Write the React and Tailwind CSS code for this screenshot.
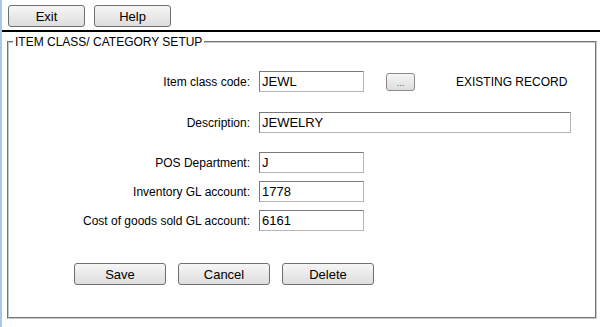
const btn =
  "h-[22px] rounded-[3px] border border-[#707070] bg-gradient-to-b from-[#f6f6f6] to-[#dddddd] text-[13px] text-black leading-none";

const Field = ({ label, value, width = "w-[105px]" }) => (
  <div className="flex items-center">
    <div className="w-[250px] pr-[9px] text-right text-[12px]">{label}</div>
    <div
      className={`${width} h-[21px] border border-t-[#7a7a7a] border-l-[#7a7a7a] border-r-[#b5b5b5] border-b-[#b5b5b5] px-[2px] text-[13px] leading-[19px] bg-white`}
    >
      {value}
    </div>
  </div>
);

export default function App() {
  return (
    <div className="w-[600px] h-[327px] bg-white text-black font-['Liberation_Sans',Arial,sans-serif] border-l-2 border-[#a9c7e8] overflow-hidden">
      {/* верхняя панель */}
      <div className="flex gap-[9px] pl-[6px] pt-[5px] h-[30px]">
        <button className={`${btn} w-[77px]`}>Exit</button>
        <button className={`${btn} w-[77px]`}>Help</button>
      </div>
      <div className="h-[2px] bg-black"></div>

      <fieldset className="mt-[3px] ml-[5px] w-[590px] h-[284px] border-2 [border-style:groove] border-[#c8c8c8] px-0">
        <legend className="ml-[4px] px-[2px] text-[12px] leading-[14px]">ITEM CLASS/ CATEGORY SETUP</legend>

        <div className="pt-[22px]">
          <div className="flex items-center">
            <Field label="Item class code:" value="JEWL" />
            <button className="ml-[22px] w-[29px] h-[18px] rounded-[3px] border border-[#8a8a8a] bg-gradient-to-b from-[#f6f6f6] to-[#dddddd] text-[9px] text-[#3060a0] leading-none pt-[4px]">...</button>
            <div className="ml-[41px] text-[12px]">EXISTING RECORD</div>
          </div>
          <div className="mt-[20px]">
            <Field label="Description:" value="JEWELRY" width="w-[312px]" />
          </div>
          <div className="mt-[19px]">
            <Field label="POS Department:" value="J" />
          </div>
          <div className="mt-[8px]">
            <Field label="Inventory GL account:" value="1778" />
          </div>
          <div className="mt-[8px]">
            <Field label="Cost of goods sold GL account:" value="6161" />
          </div>

          <div className="flex gap-[12px] ml-[65px] mt-[32px]">
            <button className={`${btn} w-[92px]`}>Save</button>
            <button className={`${btn} w-[92px]`}>Cancel</button>
            <button className={`${btn} w-[92px]`}>Delete</button>
          </div>
        </div>
      </fieldset>
    </div>
  );
}
